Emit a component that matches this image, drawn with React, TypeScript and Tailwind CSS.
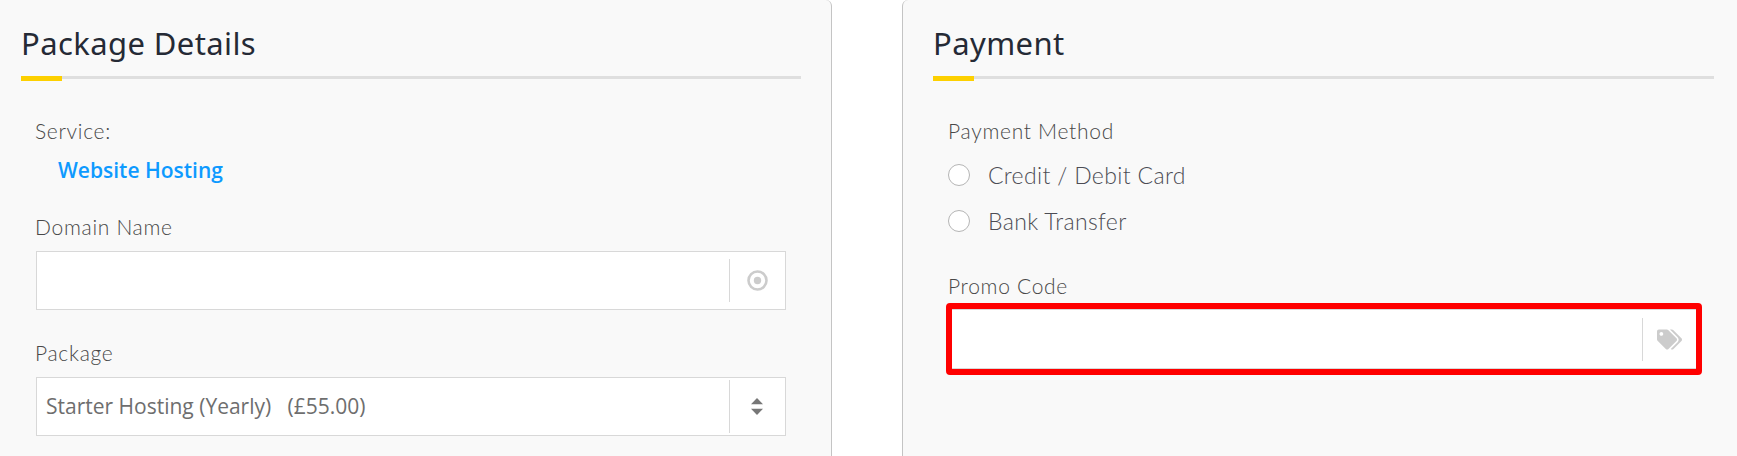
import React from 'react';
import { FaTags } from 'react-icons/fa';

const label = "font-['Lato','Noto_Sans',sans-serif] font-light text-[21px] tracking-[0.7px] leading-[24px] text-[#484848]";

function Heading({ title }: { title: string }) {
  return (
    <div className="relative h-[81px]">
      <h2 className="pt-[23px] font-['Noto_Sans',sans-serif] text-[31px] tracking-[0.4px] leading-[40px] text-[#252a35]">{title}</h2>
      <div className="absolute bottom-[2px] left-0 right-0 h-[3px] bg-[#dfdfdf]" />
      <div className="absolute bottom-0 left-0 h-[5px] w-[41px] bg-[#fdd000]" />
    </div>
  );
}

function Addon({ children, className }: { children: React.ReactNode; className: string }) {
  return (
    <div className={`flex shrink-0 items-center justify-center border-l border-[#d8d8d8] ${className}`}>
      {children}
    </div>
  );
}

function DotCircleIcon() {
  return (
    <svg width="21" height="21" viewBox="0 0 21 21">
      <circle cx="10.5" cy="10.5" r="9" fill="none" stroke="#cccccc" strokeWidth="2.6" />
      <circle cx="10.5" cy="10.5" r="3.7" fill="#cccccc" />
    </svg>
  );
}

function SortIcon() {
  return (
    <svg width="12" height="17" viewBox="0 0 12 17">
      <path d="M6 0 L12 6.3 H0 Z" fill="#777777" />
      <path d="M0 10.7 H12 L6 17 Z" fill="#777777" />
    </svg>
  );
}

function Radio({ text }: { text: string }) {
  return (
    <div className="flex h-[22px] items-center">
      <span className="h-[22px] w-[22px] shrink-0 rounded-full border border-[#b5b5b5] bg-white" />
      <span className="ml-[18px] font-['Lato','Noto_Sans',sans-serif] font-light text-[23px] tracking-[0.35px] leading-[22px] text-[#4c4c54]">{text}</span>
    </div>
  );
}

export default function App() {
  return (
    <div className="flex h-[456px] w-[1737px] overflow-hidden bg-white">
      <section className="h-full w-[832px] shrink-0 rounded-tr-[6px] border-r border-[#c4c4c4] bg-[#f9f9f9] pl-[21px] pr-[30px]">
        <Heading title="Package Details" />
        <div className="px-[15px]">
          <div className={`mt-[38px] -ml-px ${label}`}>Service:</div>
          <div className="mt-[15px] pl-[22px] font-['Open_Sans',sans-serif] text-[21px] font-semibold leading-[24px] text-[#0e9aff]">
            Website Hosting
          </div>
          <div className={`mt-[33px] -ml-px ${label}`}>Domain Name</div>
          <div className="mt-[12px] flex h-[59px] items-center justify-end border border-[#d8d8d8] bg-white">
            <Addon className="h-[43px] w-[56px] pr-px"><DotCircleIcon /></Addon>
          </div>
          <div className={`mt-[31px] -ml-px ${label}`}>Package</div>
          <div className="mt-[12px] flex h-[59px] items-center border border-[#d8d8d8] bg-white pl-[9px]">
            <span className="flex-1 whitespace-pre font-['Open_Sans',sans-serif] text-[21px] text-[#6e6e6e]">
              Starter Hosting (Yearly)   (£55.00)
            </span>
            <Addon className="h-[53px] w-[56px] pr-px"><SortIcon /></Addon>
          </div>
        </div>
      </section>

      <div className="w-[70px] shrink-0" />

      <section className="h-full flex-1 rounded-tl-[6px] border-l border-[#c4c4c4] bg-[#f9f9f9] pl-[30px] pr-[23px]">
        <Heading title="Payment" />
        <div className="pl-[15px]">
          <div className={`mt-[38px] ${label}`}>Payment Method</div>
          <div className="mt-[21px] flex flex-col gap-[24px]">
            <Radio text="Credit / Debit Card" />
            <Radio text="Bank Transfer" />
          </div>
          <div className={`mt-[42px] ${label}`}>Promo Code</div>
          <div className="mt-[5px] -ml-[2px] mr-[12px] rounded-[4px] border-[6px] border-[#ff0000] bg-white">
            <div className="flex h-[60px] items-center justify-end border-y border-[#d8d8d8]">
              <Addon className="h-[43px] w-[54px]"><FaTags size={25} color="#cccccc" /></Addon>
            </div>
          </div>
        </div>
      </section>
    </div>
  );
}
